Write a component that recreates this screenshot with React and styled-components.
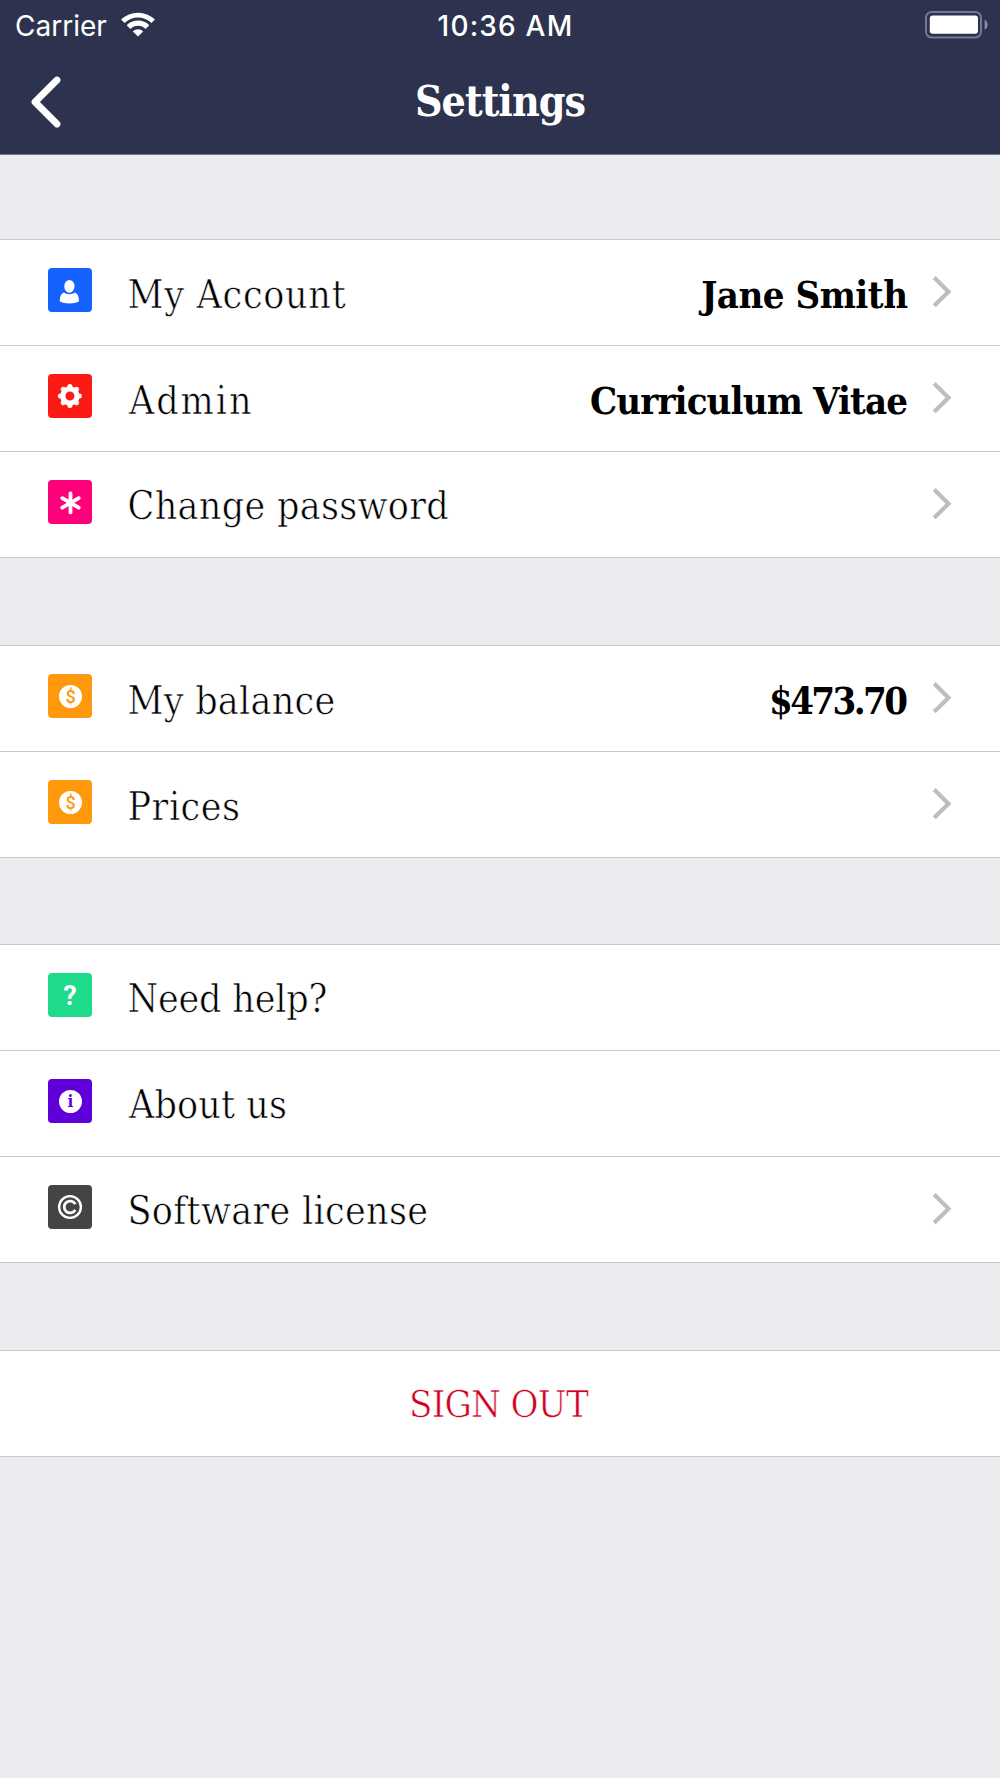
import React from 'react'
import styled, { createGlobalStyle } from 'styled-components'

const GlobalStyle = createGlobalStyle`
  * {
    box-sizing: border-box;
  }

  body {
    margin: 0;
    background: #ebebf0;
  }
`

const slab = "'DejaVu Serif Condensed', 'DejaVu Serif', serif"

const StyledScreen = styled.div`
  background: #ebebf0;
  min-height: 1778px;
  overflow: hidden;
`

const StyledHeader = styled.header`
  background: #2d334e;
  border-bottom: 1px solid #74778e;
  color: #fff;
  height: 155px;
`

const StyledStatusBar = styled.div`
  align-items: center;
  display: grid;
  font-family: Inter, sans-serif;
  font-size: 28px;
  grid-template-columns: 1fr auto 1fr;
  height: 52px;
  line-height: 34px;
  padding: 0 12px 0 15px;
`

const StyledCarrier = styled.div`
  display: flex;
  gap: 14px;
  > svg {
    margin-top: 3px;
  }
`

const StyledClock = styled.div`
  font-weight: 500;
  letter-spacing: 1.2px;
  padding-left: 8px;
`

const StyledBattery = styled.svg`
  justify-self: end;
  margin-top: -3px;
`

const StyledNavBar = styled.div`
  align-items: center;
  display: grid;
  grid-template-columns: 100px 1fr 100px;
  height: 100px;
`

const StyledBackButton = styled.button`
  background: none;
  border: 0;
  display: flex;
  height: 52px;
  padding: 0 0 0 30px;
`

const StyledTitle = styled.h1`
  font: bold 42.5px/50px ${slab};
  letter-spacing: -0.95px;
  margin: 0;
  padding-bottom: 2px;
  text-align: center;
`

const StyledGroup = styled.section`
  background: #fff;
  border-top: 1px solid #c8c7cc;
  margin-top: ${p => p.$gap}px;
`

const StyledRow = styled.div`
  align-items: center;
  border-bottom: 1px solid #c8c7cc;
  display: flex;
  height: 106px;
  padding: 0 48px;
`

const StyledTile = styled.div`
  align-items: center;
  background: ${p => p.$color};
  border-radius: 4px;
  color: #fff;
  display: flex;
  flex: none;
  height: 44px;
  justify-content: center;
  margin-bottom: 5px;
  width: 44px;
`

// light weight: the outline in the row colour shaves the stems
const StyledLabel = styled.span`
  -webkit-text-stroke: 0.6px #fff;
  color: #000;
  flex: 1;
  font: 39px/44px ${slab};
  letter-spacing: ${p => p.$spacing}px;
  margin-left: ${p => p.$indent}px;
  padding-top: ${p => p.$drop}px;
`

const StyledValue = styled.span`
  color: #000;
  font: bold 38px/44px ${slab};
  letter-spacing: ${p => p.$spacing}px;
  margin-right: ${p => 24 - p.$spacing}px;
  padding-top: 4px;
`

const StyledChevron = styled.svg`
  margin-bottom: 2px;
`

const StyledMark = styled.span`
  font: bold 27px/44px Roboto, sans-serif;
  padding-top: 2px;
`

const StyledDisc = styled.span`
  background: #fff;
  border-radius: 50%;
  color: ${p => p.$color};
  font: ${p => p.$font};
  height: 23px;
  margin: 1px 0 0 1px;
  text-align: center;
  width: 23px;
`

const StyledSignOut = styled.div`
  -webkit-text-stroke: 0.6px #fff;
  border-bottom: 1px solid #c8c7cc;
  color: #d0021b;
  font: 38px/44px ${slab};
  height: 106px;
  letter-spacing: -0.7px;
  padding: 31px 3px 0 0;
  text-align: center;
`

const PersonIcon = () => (
  <svg width="44" height="44" fill="#fff">
    <ellipse cx="21.4" cy="18.3" rx="5.1" ry="6.4" />
    <path d="M16 24.6c1.4 1.1 3.2 1.7 5.4 1.7s4-.6 5.4-1.7c2.9.9 4.2 4 4.2 9-2.6 1.3-5.7 1.8-9.6 1.8s-7-.5-9.6-1.8c0-5 1.3-8.1 4.2-9z" />
  </svg>
)

const GearIcon = () => (
  <svg width="44" height="44" fill="none" stroke="#fff">
    <circle cx="21.9" cy="22" r="7.1" strokeWidth="5.2" />
    {[0, 45, 90, 135, 180, 225, 270, 315].map(a => (
      <path
        key={a}
        d="M21.9 13.5v-1"
        strokeWidth="5"
        strokeLinecap="round"
        transform={`rotate(${a} 21.9 22)`}
      />
    ))}
  </svg>
)

const AsteriskIcon = () => (
  <svg width="44" height="44" stroke="#fff" strokeWidth="3.8">
    {[0, 60, 120].map(a => (
      <path
        key={a}
        d="M22.5 13.4v19"
        strokeLinecap="round"
        transform={`rotate(${a} 22.5 22.9)`}
      />
    ))}
  </svg>
)

const CopyrightIcon = () => (
  <svg width="44" height="44" fill="none" stroke="#fff">
    <circle cx="22" cy="22" r="10.9" strokeWidth="2.4" />
    <path d="M27.3 19.2a5.9 5.9 0 1 0 0 5.6" strokeWidth="2.8" />
  </svg>
)

const DollarIcon = () => (
  <StyledDisc $color="#ff980d" $font="500 18px/24px Roboto, sans-serif">
    $
  </StyledDisc>
)

const InfoIcon = () => (
  <StyledDisc $color="#5f00db" $font={`bold 17px/22px ${slab}`}>
    i
  </StyledDisc>
)

const Chevron = () => (
  <StyledChevron width="20" height="32" fill="none" stroke="#bdbdc3">
    <path d="M2.2 1.6 16.5 15.700 2.2 29.800" strokeWidth="4.2" />
  </StyledChevron>
)

const groups = [
  {
    gap: 84,
    rows: [
      { label: 'My Account', value: 'Jane Smith', color: '#1463ff', icon: <PersonIcon />, spacing: 0.7, valueSpacing: -0.5, drop: 5, link: true },
      { label: 'Admin', value: 'Curriculum Vitae', color: '#fc1b14', icon: <GearIcon />, spacing: 1.9, valueSpacing: -0.88, indent: 37, drop: 5, link: true },
      { label: 'Change password', color: '#ff007b', icon: <AsteriskIcon />, spacing: 0.3, drop: 3, link: true }
    ]
  },
  {
    gap: 87,
    rows: [
      { label: 'My balance', value: '$473.70', color: '#ff980d', icon: <DollarIcon />, spacing: 0.25, valueSpacing: -2.6, drop: 5, link: true },
      { label: 'Prices', color: '#ff980d', icon: <DollarIcon />, spacing: 0.5, drop: 5, link: true }
    ]
  },
  {
    gap: 86,
    rows: [
      { label: 'Need help?', color: '#1edb8b', icon: <StyledMark>?</StyledMark>, spacing: -0.2, drop: 3 },
      { label: 'About us', color: '#5f00db', icon: <InfoIcon />, spacing: 0.1, indent: 37, drop: 3 },
      { label: 'Software license', color: '#444', icon: <CopyrightIcon />, spacing: 0.3, drop: 3, link: true }
    ]
  }
]

const SettingsRow = props => (
  <StyledRow>
    <StyledTile $color={props.color}>{props.icon}</StyledTile>
    <StyledLabel
      $spacing={props.spacing}
      $indent={props.indent || 35.5}
      $drop={props.drop}
    >
      {props.label}
    </StyledLabel>
    {props.value && (
      <StyledValue $spacing={props.valueSpacing}>{props.value}</StyledValue>
    )}
    {props.link && <Chevron />}
  </StyledRow>
)

const StatusBar = () => (
  <StyledStatusBar>
    <StyledCarrier>
      Carrier
      <svg width="34" height="26" viewBox="0 0 34 26" fill="#fff">
        <path d="M17 24.6 11.8 19.4a7.4 7.4 0 0 1 10.4 0z" />
        <path d="M9.4 17a10.8 10.8 0 0 1 15.2 0l3.7-3.8a16.1 16.1 0 0 0-22.6 0z" />
        <path d="M3.5 11.1a19.1 19.1 0 0 1 27 0L33.9 7.6a24 24 0 0 0-33.8 0z" />
      </svg>
    </StyledCarrier>
    <StyledClock>10:36 AM</StyledClock>
    <StyledBattery width="64" height="28">
      <rect x="2" y="1" width="55" height="25.4" rx="5.5" fill="none" stroke="#737990" strokeWidth="2" />
      <rect x="5.8" y="4.6" width="48.2" height="18.2" rx="3" fill="#fff" />
      <path d="M60.6 8.8c4 1.5 4 8.500 0 10z" fill="#8b90a3" />
    </StyledBattery>
  </StyledStatusBar>
)

const App = () => (
  <StyledScreen>
    <GlobalStyle />
    <StyledHeader>
      <StatusBar />
      <StyledNavBar>
        <StyledBackButton aria-label="Back">
          <svg width="32" height="52" fill="none" stroke="#fff">
            <path
              d="M27 4 5 26l22 22"
              strokeWidth="6.8"
              strokeLinecap="round"
              strokeLinejoin="round"
            />
          </svg>
        </StyledBackButton>
        <StyledTitle>Settings</StyledTitle>
      </StyledNavBar>
    </StyledHeader>
    {groups.map(group => (
      <StyledGroup key={group.rows[0].label} $gap={group.gap}>
        {group.rows.map(row => (
          <SettingsRow key={row.label} {...row} />
        ))}
      </StyledGroup>
    ))}
    <StyledGroup $gap={87}>
      <StyledSignOut>SIGN OUT</StyledSignOut>
    </StyledGroup>
  </StyledScreen>
)

export default App
